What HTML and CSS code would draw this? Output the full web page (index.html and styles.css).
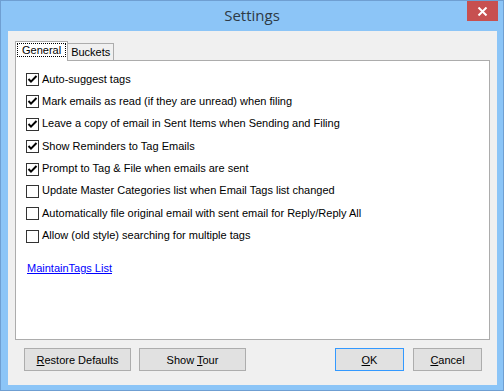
FILE: index.html
```html
<!DOCTYPE html>
<html lang="en">
<head>
    <meta charset="UTF-8">
    <meta name="viewport" content="width=device-width, initial-scale=1.0">
    <title>Settings</title>
    <link rel="stylesheet" href="styles.css">
</head>
<body>
    <div class="window">
        <div class="titlebar">
            <span></span>
            <div class="title">Settings</div>
            <button class="close" title="Close">
                <svg width="11" height="9" viewBox="0 0 11 9">
                    <path d="M1.5 0.5 L9.5 8.5 M9.5 0.5 L1.5 8.5" stroke="#fff" stroke-width="2" fill="none"/>
                </svg>
            </button>
        </div>

        <div class="client">
            <div class="tabs">
                <div class="tab selected"><span class="focus">General</span></div>
                <div class="tab">Buckets</div>
            </div>

            <div class="panel">
                <div class="options">
                    <label class="option"><span class="box checked"></span><span class="text">Auto-suggest tags</span></label>
                    <label class="option"><span class="box checked"></span><span class="text">Mark emails as read (if they are unread) when filing</span></label>
                    <label class="option"><span class="box checked"></span><span class="text">Leave a copy of email in Sent Items when Sending and Filing</span></label>
                    <label class="option"><span class="box checked"></span><span class="text">Show Reminders to Tag Emails</span></label>
                    <label class="option"><span class="box checked"></span><span class="text">Prompt to Tag &amp; File when emails are sent</span></label>
                    <label class="option"><span class="box"></span><span class="text">Update Master Categories list when Email Tags list changed</span></label>
                    <label class="option"><span class="box"></span><span class="text">Automatically file original email with sent email for Reply/Reply All</span></label>
                    <label class="option"><span class="box"></span><span class="text">Allow (old style) searching for multiple tags</span></label>
                </div>
                <a class="link" href="#">MaintainTags List</a>
            </div>

            <div class="buttons">
                <div class="group">
                    <button class="btn wide"><u>R</u>estore Defaults</button>
                    <button class="btn wide">Show <u>T</u>our</button>
                </div>
                <div class="group">
                    <button class="btn default"><u>O</u>K</button>
                    <button class="btn"><u>C</u>ancel</button>
                </div>
            </div>
        </div>
    </div>
</body>
</html>
```

FILE: styles.css
```css
body {
    margin: 0;
    font-family: "Liberation Sans", Arial, sans-serif;
    font-size: 11px;
    color: #000;
}
.window {
    width: 504px;
    height: 391px;
    box-sizing: border-box;
    background: #8cc5f7;
    border: 1px solid #6f9fd2;
    display: flex;
    flex-direction: column;
}
.titlebar {
    height: 30px;
    display: grid;
    grid-template-columns: 1fr auto 1fr;
    align-items: start;
}
.title {
    font-family: "Open Sans", "Noto Sans", sans-serif;
    font-size: 15px;
    color: #2e3a45;
    padding-top: 4px;
}
.close {
    justify-self: end;
    width: 31px;
    height: 20px;
    margin-right: 5px;
    border: none;
    padding: 0;
    background: #c75050;
    display: flex;
    align-items: center;
    justify-content: center;
}
.client {
    flex: 1;
    margin: 0 6px 5px 7px;
    background: #f0f0f0;
    padding: 10px 7px 0 7px;
}
.tabs {
    display: flex;
    align-items: flex-end;
    height: 19px;
}
.tab {
    height: 17px;
    box-sizing: border-box;
    padding: 0 3px;
    border: 1px solid #acacac;
    border-bottom: none;
    background: #f0f0f0;
    line-height: 16px;
    margin-left: -1px;
}
.tab.selected {
    height: 20px;
    margin-left: 0;
    margin-bottom: -1px;
    background: #fff;
    padding: 1px 1px 0 1px;
    position: relative;
    z-index: 1;
}
.focus {
    display: block;
    border: 1px dotted #000;
    padding: 0 4px;
    line-height: 12px;
}
.panel {
    height: 280px;
    box-sizing: border-box;
    background: #fff;
    border: 1px solid #acacac;
    padding: 12px 10px 0 10px;
}
.options {
    display: flex;
    flex-direction: column;
    gap: 9.4px;
}
.option {
    display: flex;
    align-items: center;
    height: 13px;
    gap: 3px;
    white-space: nowrap;
}
.box {
    width: 13px;
    height: 13px;
    box-sizing: border-box;
    border: 1px solid #333;
    background: #fff;
    flex: none;
}
.box.checked {
    background: #fff url("data:image/svg+xml,%3Csvg xmlns='http://www.w3.org/2000/svg' width='11' height='11' viewBox='0 0 11 11'%3E%3Cpath d='M1.5 5 L4 7.6 L9.5 2' stroke='%23000' stroke-width='2' fill='none'/%3E%3C/svg%3E") no-repeat center;
}
.text {
    margin-bottom: 2px;
}
.link {
    display: inline-block;
    margin: 19px 0 0 1px;
    color: #0000ff;
    text-decoration: underline;
}
.buttons {
    display: flex;
    justify-content: space-between;
    margin-top: 8px;
    padding: 0 8px 0 9px;
}
.group {
    display: flex;
    gap: 8px;
}
.group + .group {
    gap: 9px;
}
.btn {
    width: 69px;
    height: 23px;
    font-family: inherit;
    font-size: 11px;
    color: #000;
    background: #e1e1e1;
    border: 1px solid #adadad;
    padding: 0;
}
.btn.wide {
    width: 107px;
}
.btn.default {
    border-color: #3399ff;
}
```
